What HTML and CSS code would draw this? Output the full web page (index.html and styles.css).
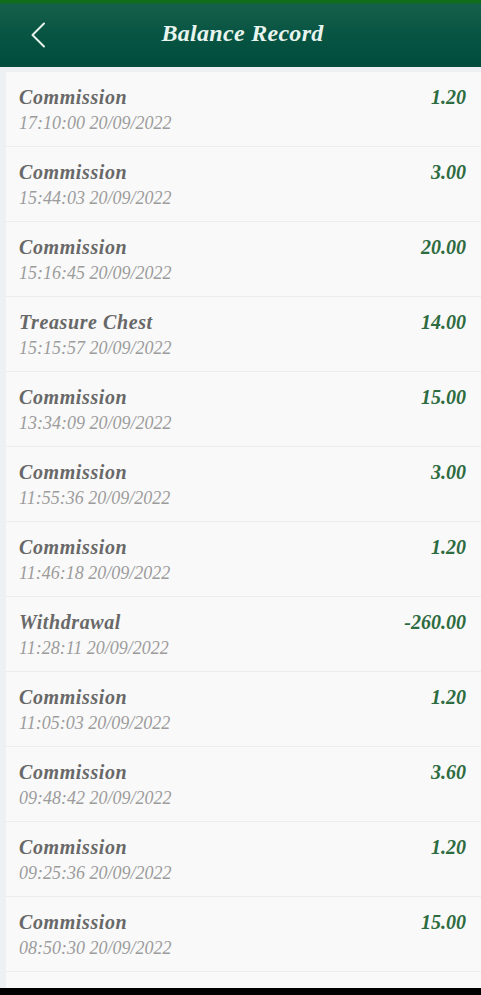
FILE: index.html
```html
<!DOCTYPE html>
<html lang="en">
<head>
  <meta charset="UTF-8" />
  <title>Balance Record</title>
  <link rel="stylesheet" href="styles.css">
</head>
<body>

<header class="top-bar">
  <span class="back-btn">
    <svg width="16" height="26" viewBox="0 0 16 26"><path d="M14 1.5 L2.5 13 L14 24.5" fill="none" stroke="#e6f2ec" stroke-width="2" stroke-linecap="round" stroke-linejoin="round"/></svg>
  </span>
  <h1>Balance Record</h1>
</header>

<div class="record-list">
  <div class="record-row">
    <div class="record-info"><p class="record-type">Commission</p><p class="record-time">17:10:00 20/09/2022</p></div>
    <span class="record-amount">1.20</span>
  </div>
  <div class="record-row">
    <div class="record-info"><p class="record-type">Commission</p><p class="record-time">15:44:03 20/09/2022</p></div>
    <span class="record-amount">3.00</span>
  </div>
  <div class="record-row">
    <div class="record-info"><p class="record-type">Commission</p><p class="record-time">15:16:45 20/09/2022</p></div>
    <span class="record-amount">20.00</span>
  </div>
  <div class="record-row">
    <div class="record-info"><p class="record-type">Treasure Chest</p><p class="record-time">15:15:57 20/09/2022</p></div>
    <span class="record-amount">14.00</span>
  </div>
  <div class="record-row">
    <div class="record-info"><p class="record-type">Commission</p><p class="record-time">13:34:09 20/09/2022</p></div>
    <span class="record-amount">15.00</span>
  </div>
  <div class="record-row">
    <div class="record-info"><p class="record-type">Commission</p><p class="record-time">11:55:36 20/09/2022</p></div>
    <span class="record-amount">3.00</span>
  </div>
  <div class="record-row">
    <div class="record-info"><p class="record-type">Commission</p><p class="record-time">11:46:18 20/09/2022</p></div>
    <span class="record-amount">1.20</span>
  </div>
  <div class="record-row">
    <div class="record-info"><p class="record-type">Withdrawal</p><p class="record-time">11:28:11 20/09/2022</p></div>
    <span class="record-amount">-260.00</span>
  </div>
  <div class="record-row">
    <div class="record-info"><p class="record-type">Commission</p><p class="record-time">11:05:03 20/09/2022</p></div>
    <span class="record-amount">1.20</span>
  </div>
  <div class="record-row">
    <div class="record-info"><p class="record-type">Commission</p><p class="record-time">09:48:42 20/09/2022</p></div>
    <span class="record-amount">3.60</span>
  </div>
  <div class="record-row">
    <div class="record-info"><p class="record-type">Commission</p><p class="record-time">09:25:36 20/09/2022</p></div>
    <span class="record-amount">1.20</span>
  </div>
  <div class="record-row">
    <div class="record-info"><p class="record-type">Commission</p><p class="record-time">08:50:30 20/09/2022</p></div>
    <span class="record-amount">15.00</span>
  </div>
  <div class="record-row">
    <div class="record-info"><p class="record-type">Commission</p><p class="record-time">08:12:44 20/09/2022</p></div>
    <span class="record-amount">15.00</span>
  </div>
</div>

<div class="nav-strip"></div>

</body>
</html>
```

FILE: styles.css
```css
* {
  box-sizing: border-box;
  margin: 0;
  padding: 0;
}

body {
  background: #eef1f4;
  font-family: 'Liberation Serif', 'DejaVu Serif', serif;
  height: 995px;
  overflow: hidden;
}

.top-bar {
  height: 67px;
  display: flex;
  align-items: center;
  position: relative;
  background: linear-gradient(to bottom, #0f6d1c 0, #0f6d1c 3px, #15604a 4px, #0a5644 30px, #004c3d 100%);
}

.back-btn {
  display: flex;
  margin-left: 30px;
  margin-top: 2px;
}

.top-bar h1 {
  position: absolute;
  left: 0;
  right: 0;
  text-align: center;
  font-size: 24px;
  font-weight: bold;
  font-style: italic;
  color: #e8f4ee;
  padding-left: 4px;
  letter-spacing: 0.3px;
}

.record-list {
  margin: 5px 0 0 6px;
  background: #f9f9f9;
}

.record-row {
  height: 75px;
  display: flex;
  justify-content: space-between;
  padding: 13px 15px 0 13px;
  border-bottom: 1px solid #ededed;
}

.record-type {
  font-size: 20px;
  font-weight: bold;
  font-style: italic;
  color: #686868;
  line-height: 24px;
  letter-spacing: 0.6px;
}

.record-time {
  font-size: 18px;
  font-style: italic;
  color: #9c9c9c;
  line-height: 24px;
  margin-top: 2px;
}

.record-amount {
  font-size: 20px;
  font-weight: bold;
  font-style: italic;
  color: #2d6b40;
  line-height: 24px;
}

.nav-strip {
  position: fixed;
  left: 0;
  right: 0;
  bottom: 0;
  height: 7px;
  background: #000;
}
```
